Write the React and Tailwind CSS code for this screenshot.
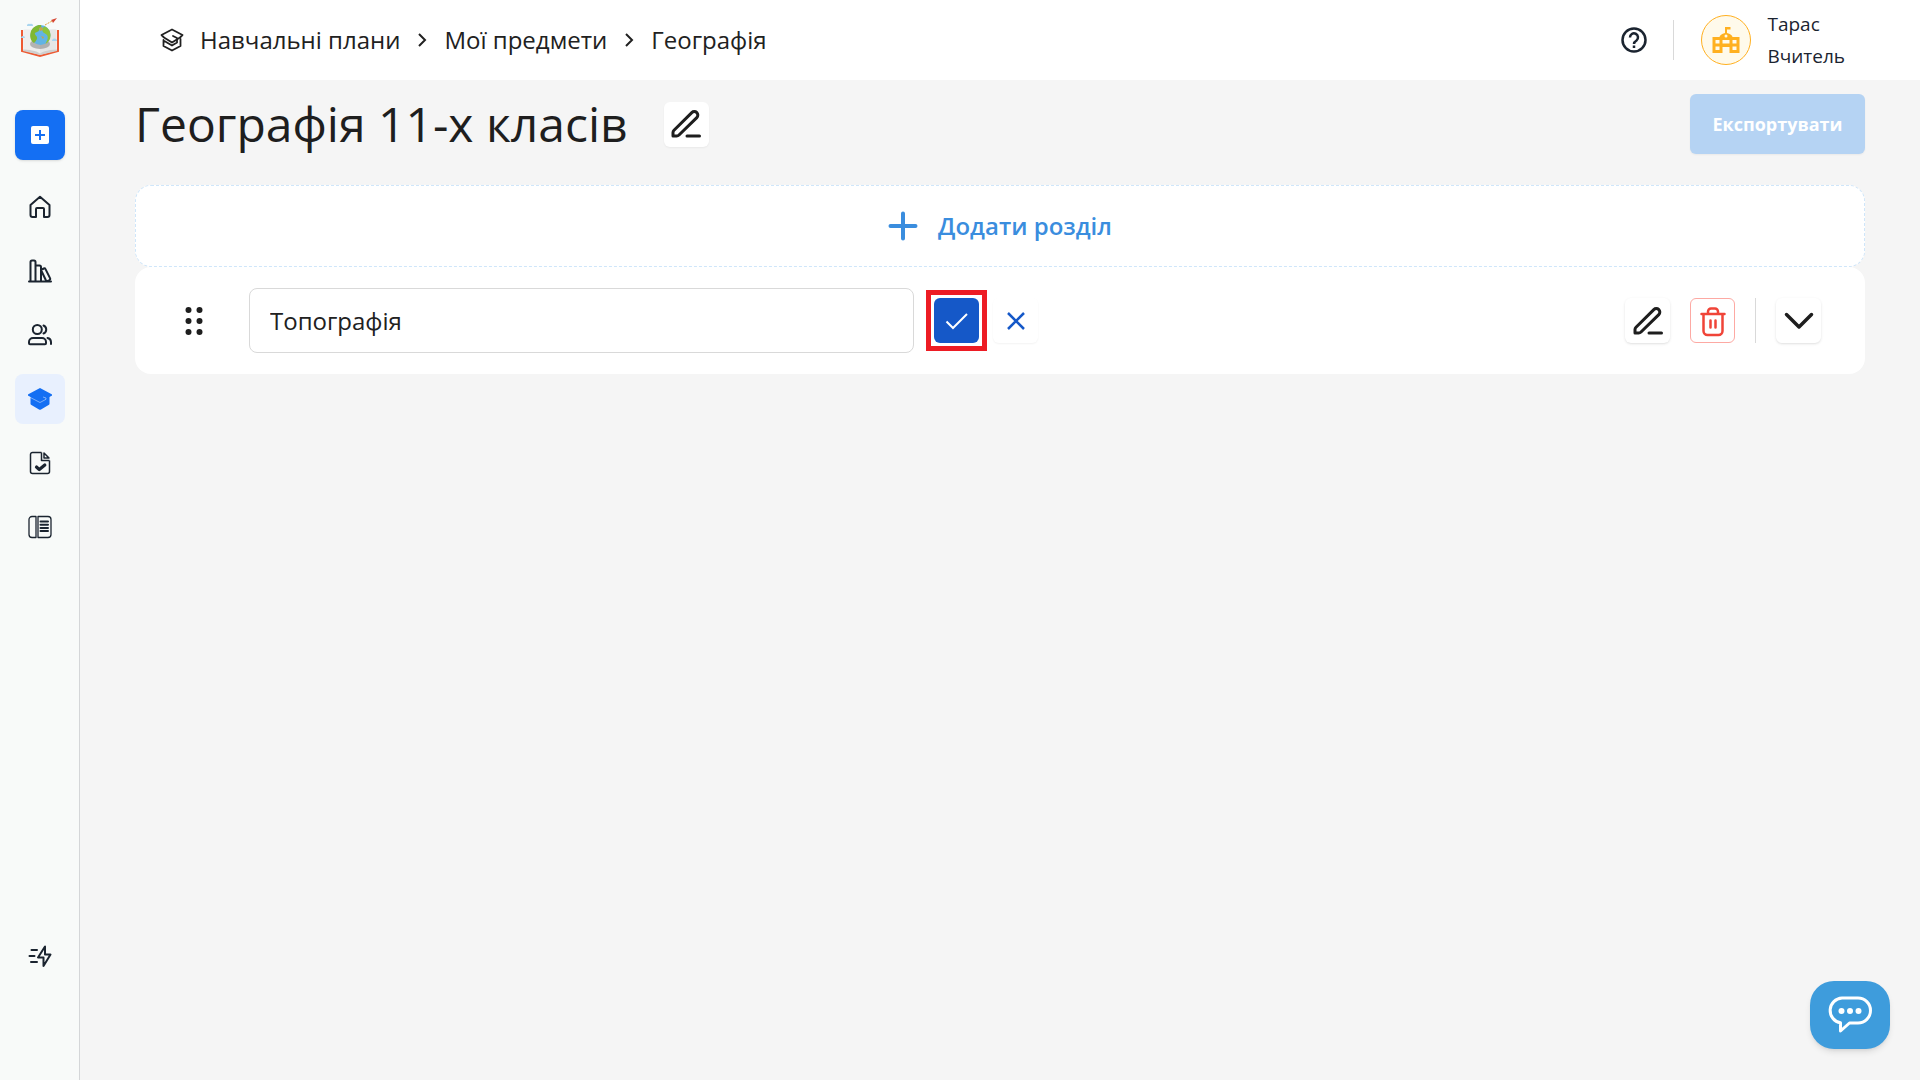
import { useState } from "react";
import clsx from "clsx";

function LogoIcon() {
  return (
    <svg viewBox="0 0 40 40" className="size-10" aria-hidden="true">
      <path d="M2 12v21l18 5L38 33V12" fill="#f4f4f4" stroke="#ee5a33" strokeWidth="2" />
      <path d="M3.500 11.500c6-1 12.500 1 16.500 4v20c-4-3-10.500-4-16.500-4z" fill="#eeeeee" />
      <path d="M36.500 11.500c-6-1-12.500 1-16.500 4v20c4-3 10.500-4 16.500-4z" fill="#e6e6e6" />
      <path d="M3 31.500c6 0 13 1 17 4 4-3 11-4 17-4v1.500l-17 4-17-4z" fill="#cfcfcf" />
      <ellipse cx="20" cy="26" rx="10" ry="5" fill="#777" opacity=".5" />
      <circle cx="20.500" cy="17" r="10" fill="#62b4e4" />
      <path d="M11 13c2-4 6-6.500 10-6 1 2-1 3-2 4 1 2-2 3-4 4-1 2 3 3 2 6-1 2-2 3-3 4-3-2-5-6-3-12z" fill="#7fb832" />
      <path d="M25 8.500c4 2 5.500 5 5.500 9s-2 6.500-5 8.500c1-3 3-5 2-8s-4-2-5-5 .5-3.500 2.500-4.500z" fill="#8cc43c" />
      <path d="M19 10l3-1 1 3-3 1zM21 18l3 1-1 2z" fill="#c6a44a" />
      <path d="M7 8a2 2 0 0 1 3-2 2 2 0 0 1 3 2zM1 20a2 2 0 0 1 4 0zM32 23a2 2 0 0 1 5 0z" fill="#a9d5ef" />
      <path d="M25 7l7-4" stroke="#e2a13c" strokeDasharray="2 1" />
      <path d="M31 2l6-2-4 5-1-2z" fill="#d64632" />
    </svg>
  );
}

function HomeIcon() {
  return (
    <svg viewBox="0 0 24 24" className="size-6" fill="none" stroke="currentColor" strokeWidth="2" strokeLinejoin="round" aria-hidden="true">
      <path d="M2.500 10 12 1.800l9.500 8.200V20a2 2 0 0 1-2 2H16v-8a1 1 0 0 0-1-1H9a1 1 0 0 0-1 1v8H4.500a2 2 0 0 1-2-2z" />
    </svg>
  );
}

function BooksIcon() {
  return (
    <svg viewBox="0 0 24 24" className="size-6" fill="none" stroke="currentColor" strokeWidth="2" strokeLinejoin="round" strokeLinecap="round" aria-hidden="true">
      <path d="M1 22.500h22M2.500 22V3a1.500 1.500 0 0 1 1.500-1.500h2A1.500 1.500 0 0 1 7.500 3v19M7.500 6.500h4A1.500 1.500 0 0 1 13 8v14" />
      <path d="m13 11 2.800-1.500a1.300 1.300 0 0 1 1.700.6l4.500 9a1.500 1.500 0 0 1-.6 2l-1.500.7a1.500 1.500 0 0 1-2-.6z" />
    </svg>
  );
}

function UsersIcon() {
  return (
    <svg viewBox="0 0 24 24" className="size-6" fill="none" stroke="currentColor" strokeWidth="2" strokeLinecap="round" strokeLinejoin="round" aria-hidden="true">
      <circle cx="9.300" cy="6.500" r="4.500" />
      <path d="M15.500 2.500a4.300 4.300 0 0 1 0 8M5 15h9a4 4 0 0 1 4 4v1.200a1 1 0 0 1-1 1H2a1 1 0 0 1-1-1V19a4 4 0 0 1 4-4zM19.500 15a4.300 4.300 0 0 1 3.500 4v2" />
    </svg>
  );
}

function PlansIcon() {
  return (
    <svg viewBox="0 0 24 24" className="size-6" fill="currentColor" aria-hidden="true">
      <path d="M2.500 9v7.800a1 1 0 0 0 .5.900l8 4.700a2 2 0 0 0 2 0l8-4.700a1 1 0 0 0 .5-.9V9z" />
      <path d="M12 1 .3 7.300a.8.8 0 0 0 0 1.400L12 15l11.700-6.300a.8.8 0 0 0 0-1.400z" />
      <path d="m2 10.300 10 5.200 6-3.200V11l-3-1" fill="none" stroke="#e8f0fe" strokeWidth=".5" />
    </svg>
  );
}

function TasksIcon() {
  return (
    <svg viewBox="0 0 24 24" className="size-6" fill="none" stroke="currentColor" strokeWidth="1.500" strokeLinejoin="round" aria-hidden="true">
      <path d="M13.500 1.500h-9a2 2 0 0 0-2 2v17a2 2 0 0 0 2 2h15a2 2 0 0 0 2-2V9.500M13.500 1.500v8h8" />
      <path d="M16 2v5h5z" />
      <path d="m8.500 16 2.800 2.600 5.500-4.600" strokeWidth="3.200" strokeLinecap="round" />
    </svg>
  );
}

function JournalIcon() {
  return (
    <svg viewBox="0 0 24 24" className="size-6" fill="none" stroke="currentColor" strokeWidth="1.300" strokeLinejoin="round" aria-hidden="true">
      <path d="M8 1.500H4a3 3 0 0 0-3 3v15a3 3 0 0 0 3 3h4zM10 1.500h10a3 3 0 0 1 3 3v15a3 3 0 0 1-3 3H10z" />
      <path d="M12.500 6.500h7.500M12.500 9.700h7.500M12.500 12.900h7.500M12.500 16.100h7.500" strokeWidth="2" strokeLinecap="round" />
    </svg>
  );
}

function FlashIcon() {
  return (
    <svg viewBox="0 0 24 24" className="size-6" fill="none" stroke="currentColor" strokeWidth="2" strokeLinecap="round" strokeLinejoin="round" aria-hidden="true">
      <path d="M3.500 6H9M1.500 12H6.500M3 18h6" />
      <path d="M17 2.500 10 13.500h5.500L15.500 22 22.500 10.500H17z" />
    </svg>
  );
}

function CapIcon() {
  return (
    <svg viewBox="0 0 24 24" className="size-6" fill="none" stroke="currentColor" strokeWidth="1.800" strokeLinejoin="round" strokeLinecap="round" aria-hidden="true">
      <path d="M12 1.500 1.500 7 4 9.500l8 5 8-5L22.500 7z" />
      <path d="M3.500 12v6l8.500 4.500 8.500-4.500v-7M3.500 12.500l8.500 5 5-3V10l-4-2" />
    </svg>
  );
}

function SchoolIcon() {
  return (
    <svg viewBox="0 0 28 28" className="size-7" aria-hidden="true">
      <path fillRule="evenodd" fill="#ffb020" d="M.5 11H7.500Q8 8.500 13 7V1h5.500v2.500H15V7q5 1.500 5.500 4h7v16H17.500v-6h-7v6H.5zM3.500 14v3.500h4V14zm7 0v3.500h7V14zm10 0v3.500h4V14zm-17 6.500V24h4v-3.500zm17 0V24h4v-3.500z" />
      <circle cx="14" cy="10" r="1.500" fill="#fffaeb" />
    </svg>
  );
}

function PencilIcon() {
  return (
    <svg viewBox="0 0 32 32" className="size-8" fill="none" stroke="currentColor" strokeWidth="3" strokeLinecap="round" strokeLinejoin="round" aria-hidden="true">
      <path d="M3 28v-3.500q0-1.300 1-2.300L21.800 4.600a3.500 3.500 0 0 1 5 5L9 27q-1 1-2.300 1zM17 28h12.500" />
    </svg>
  );
}

function TrashIcon() {
  return (
    <svg viewBox="0 0 32 32" className="size-8" fill="none" stroke="currentColor" strokeWidth="2.500" strokeLinecap="round" strokeLinejoin="round" aria-hidden="true">
      <path d="M4.500 9h23M6.500 9.500v16.500a4 4 0 0 0 4 4h11a4 4 0 0 0 4-4V9.500M11 8.500V6.500a3 3 0 0 1 3-3h4a3 3 0 0 1 3 3v2M13.500 15.500v7M18.500 15.500v7" />
    </svg>
  );
}

const menu = [
  { name: "Головна", icon: HomeIcon },
  { name: "Бібліотека", icon: BooksIcon },
  { name: "Користувачі", icon: UsersIcon },
  { name: "Навчальні плани", icon: PlansIcon, active: true },
  { name: "Завдання", icon: TasksIcon },
  { name: "Журнал", icon: JournalIcon },
];

function IconButton({ label, className, children, ...props }) {
  return (
    <button
      type="button"
      aria-label={label}
      className={clsx("flex size-[45px] shrink-0 items-center justify-center rounded-md", className)}
      {...props}
    >
      {children}
    </button>
  );
}

function Sidebar() {
  return (
    <aside className="flex w-20 shrink-0 flex-col items-center border-r border-[#d4d6d8] bg-[#f8faf9] pt-[18px] text-[#1b2430]">
      <a href="#" aria-label="На головну"><LogoIcon /></a>
      <button type="button" aria-label="Створити" className="mt-[52px] flex size-[50px] items-center justify-center rounded-lg bg-[#146ff3] shadow-sm">
        <svg viewBox="0 0 18 18" className="size-[18px]" aria-hidden="true">
          <rect width="18" height="18" rx="2" fill="#fff" />
          <path d="M9 4v10M4 9h10" stroke="#146ff3" strokeWidth="2" />
        </svg>
      </button>
      <nav className="mt-[22px] flex flex-col gap-3.5">
        {menu.map(({ name, icon: Icon, active }) => (
          <a
            key={name}
            href="#"
            aria-label={name}
            className={clsx("flex size-[50px] items-center justify-center rounded-lg", active && "bg-[#e8f0fe] text-[#146ff3]")}
          >
            <Icon />
          </a>
        ))}
      </nav>
      <a href="#" aria-label="Швидкі дії" className="mt-auto mb-28">
        <FlashIcon />
      </a>
    </aside>
  );
}

function Chevron() {
  return (
    <svg viewBox="0 0 10 16" className="h-4 w-2.5" fill="none" stroke="currentColor" strokeWidth="2" aria-hidden="true">
      <path d="m2 2 6 6-6 6" />
    </svg>
  );
}

function Header() {
  return (
    <header className="flex h-20 items-center justify-between bg-white pr-[75px] pl-20 text-[#1b2430]">
      <nav className="flex items-center gap-[17px] text-2xl font-medium text-[#212121]">
        <a href="#" className="flex items-center gap-4"><CapIcon />Навчальні плани</a>
        <Chevron />
        <a href="#">Мої предмети</a>
        <Chevron />
        <span>Географія</span>
      </nav>
      <div className="flex items-center">
        <button type="button" aria-label="Допомога">
          <svg viewBox="0 0 26 26" className="size-[26px]" fill="none" stroke="currentColor" strokeWidth="2.500" aria-hidden="true">
            <circle cx="13" cy="13" r="11.500" />
            <path d="M9 10.500a4 4 0 1 1 6.500 3Q13 15 13 17M13 18.500v2.500" />
          </svg>
        </button>
        <div className="ml-[26px] h-10 w-px bg-[#d9d9d9]" />
        <div className="ml-[27px] flex size-[50px] items-center justify-center rounded-full border border-[#ffb020] bg-[#fffaeb]">
          <SchoolIcon />
        </div>
        <div className="ml-4 text-[19px] leading-8">
          <p className="font-medium">Тарас</p>
          <p>Вчитель</p>
        </div>
      </div>
    </header>
  );
}

function Section() {
  const [title, setTitle] = useState("Топографія");

  return (
    <section className="flex items-center rounded-2xl bg-white py-[21px] pr-11 pl-[50px]">
      <button type="button" aria-label="Перемістити" className="cursor-grab">
        <svg viewBox="0 0 18 30" className="h-[30px] w-[18px]" fill="#1e1e1e" aria-hidden="true">
          <circle cx="3.500" cy="4" r="3" />
          <circle cx="14.500" cy="4" r="3" />
          <circle cx="3.500" cy="15" r="3" />
          <circle cx="14.500" cy="15" r="3" />
          <circle cx="3.500" cy="26" r="3" />
          <circle cx="14.500" cy="26" r="3" />
        </svg>
      </button>
      <input
        type="text"
        aria-label="Назва розділу"
        value={title}
        onChange={(e) => setTitle(e.target.value)}
        className="ml-[46px] h-[65px] w-[665px] min-w-0 rounded-lg border border-[#d9d9d9] bg-white px-5 text-2xl text-[#212121]"
      />
      <div className="ml-3 border-[5px] border-[#ed1c24] p-[3px]">
        <IconButton label="Зберегти" className="bg-[#1558c8] text-white">
          <svg viewBox="0 0 24 24" className="size-6" fill="none" stroke="currentColor" strokeWidth="2" aria-hidden="true">
            <path d="m1.500 12.500 6.500 6.500L22 5" />
          </svg>
        </IconButton>
      </div>
      <IconButton label="Скасувати" className="ml-1.5 text-[#1558c8] shadow-xs">
        <svg viewBox="0 0 18 18" className="size-[18px]" fill="none" stroke="currentColor" strokeWidth="2.500" aria-hidden="true">
          <path d="m1 1 16 16M17 1 1 17" />
        </svg>
      </IconButton>
      <div className="ml-auto flex gap-5 text-[#1e1e1e]">
        <IconButton label="Редагувати" className="shadow-sm"><PencilIcon /></IconButton>
        <IconButton label="Видалити" className="border border-[#fda9a3] text-[#f04438]"><TrashIcon /></IconButton>
        <div className="w-px bg-[#d9d9d9]" />
        <IconButton label="Розгорнути" className="shadow-sm">
          <svg viewBox="0 0 30 18" className="h-[18px] w-[30px]" fill="none" stroke="currentColor" strokeWidth="3.500" strokeLinecap="round" strokeLinejoin="round" aria-hidden="true">
            <path d="m2.500 2.500 12.500 12.500L27.500 2.500" />
          </svg>
        </IconButton>
      </div>
    </section>
  );
}

export default function App() {
  return (
    <div className="flex min-h-screen bg-[#f5f5f5] font-['Open_Sans',sans-serif]">
      <Sidebar />
      <div className="min-w-0 flex-1">
        <Header />
        <main className="px-[55px] pt-3.5 text-[#1e1e1e]">
          <div className="flex items-center justify-between">
            <div className="flex items-center gap-9">
              <h1 className="text-5xl font-medium">Географія 11-х класів</h1>
              <IconButton label="Редагувати назву" className="bg-white shadow-xs"><PencilIcon /></IconButton>
            </div>
            <button type="button" disabled className="h-[60px] w-[175px] rounded-md bg-[#b5d3f3] text-lg font-bold text-white shadow-xs">
              Експортувати
            </button>
          </div>
          <button type="button" className="mt-[31px] flex h-[82px] w-full items-center justify-center gap-5 rounded-2xl border border-dashed border-[#cfe6fa] bg-white text-2xl font-semibold text-[#3a8dde]">
            <svg viewBox="0 0 30 30" className="size-[30px]" stroke="currentColor" strokeWidth="4" strokeLinecap="round" aria-hidden="true">
              <path d="M15 2.500v25M2.500 15h25" />
            </svg>
            Додати розділ
          </button>
          <Section />
        </main>
      </div>
      <button type="button" aria-label="Чат" className="fixed right-[30px] bottom-[31px] flex h-[68px] w-20 items-center justify-center rounded-3xl bg-[#3e9cdc] shadow-md">
        <svg viewBox="0 0 44 38" className="h-[38px] w-11" fill="none" stroke="#fff" strokeWidth="3" strokeLinejoin="round" aria-hidden="true">
          <path d="M14 2h16a12.500 12.500 0 0 1 0 25h-8.500L12.500 35v-8.200A12.500 12.500 0 0 1 14 2z" />
          <g fill="#fff" stroke="none">
            <circle cx="13.500" cy="15" r="3" />
            <circle cx="22" cy="15" r="3" />
            <circle cx="30.500" cy="15" r="3" />
          </g>
        </svg>
      </button>
    </div>
  );
}
